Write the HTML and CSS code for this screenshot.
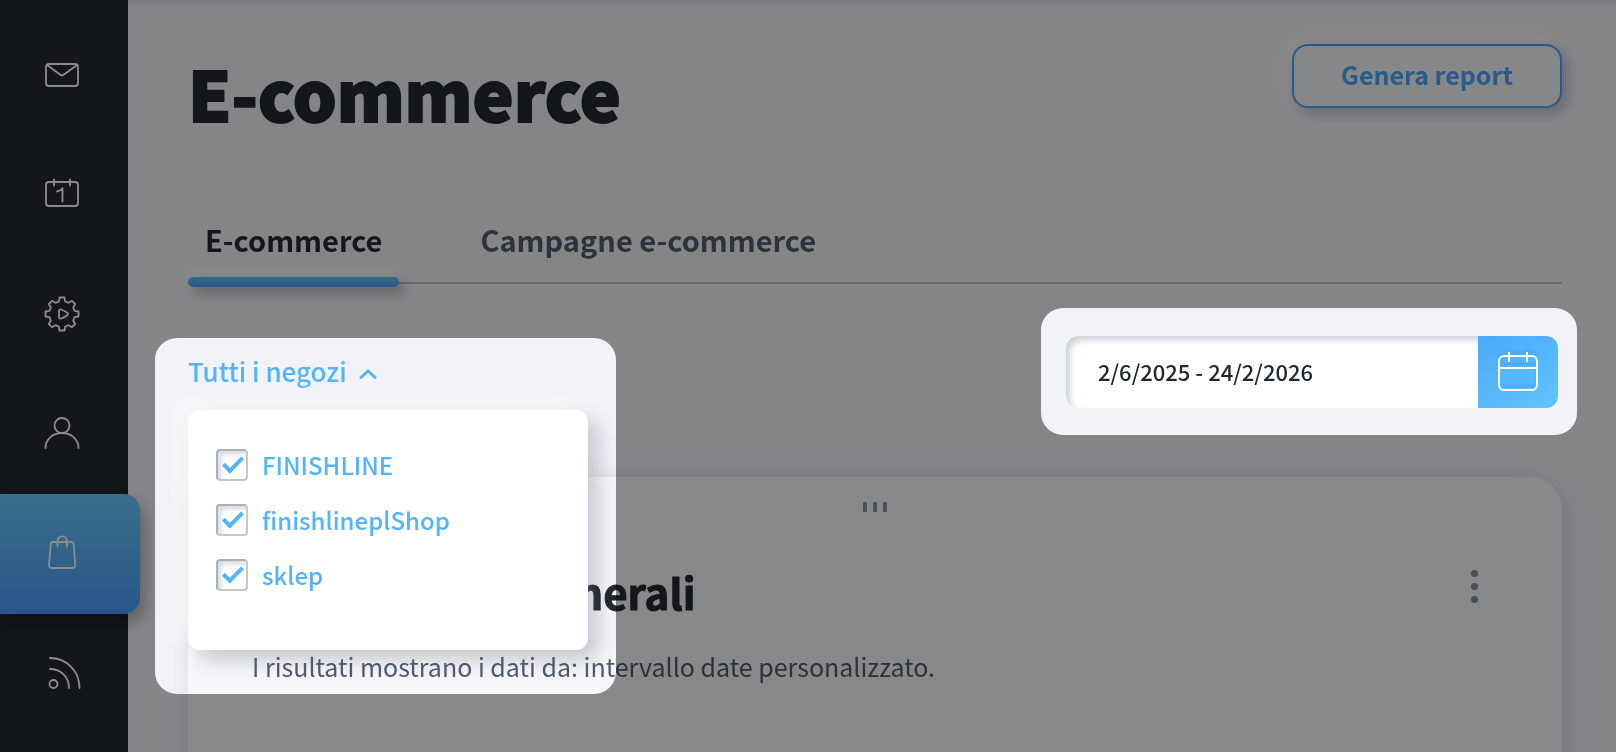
FILE: index.html
```html
<!DOCTYPE html>
<html lang="it">

<head>
    <meta charset="UTF-8">
    <meta name="viewport" content="width=device-width, initial-scale=1.0">
    <title>E-commerce</title>
    <link rel="stylesheet" href="styles.css">
</head>

<body>
    <div class="app">
        <!-- Sidebar -->
        <nav class="sidebar">
            <a href="#" class="sidebar-link" aria-label="Email">
                <svg class="icon" viewBox="0 0 40 40">
                    <rect x="4" y="10" width="32" height="22" rx="3" />
                    <path d="M5 11 L18 20.5 Q20 22 22 20.5 L35 11" />
                </svg>
            </a>
            <a href="#" class="sidebar-link" aria-label="Calendario">
                <svg class="icon" viewBox="0 0 40 40">
                    <rect x="4" y="8" width="32" height="24" rx="3" />
                    <path d="M12 5.500v6M28 5.500v6M15 17.500c2.500-.4 4-1.200 5.500-3.200V27.500" />
                </svg>
            </a>
            <a href="#" class="sidebar-link" aria-label="Automazione">
                <svg class="icon" viewBox="0 0 40 40">
                    <path d="M17.500 3.500h5L23.200 7.500L26.500 8.800L30 6.800L33.200 10L31.200 13.500L32.500 16.800L36.500 17.500V22.500L32.500 23.200L31.200 26.500L33.200 30L30 33.200L26.500 31.200L23.200 32.500L22.500 36.500H17.500L16.800 32.500L13.500 31.200L10 33.200L6.800 30L8.800 26.500L7.500 23.200L3.500 22.500V17.500L7.500 16.800L8.800 13.500L6.800 10L10 6.800L13.500 8.800L16.800 7.500Z" />
                    <path d="M17 17q0-2 2-1.500q4.500 1.500 6.500 3.500q1 1 0 2q-2 2-6.500 3.500q-2 .5-2-1.500Z" />
                </svg>
            </a>
            <a href="#" class="sidebar-link" aria-label="Contatti">
                <svg class="icon" viewBox="0 0 40 40">
                    <circle cx="20" cy="11.500" r="7.500" />
                    <path d="M3.500 34C3.500 25.500 10.500 19 20 19S36.500 25.500 36.500 34" />
                </svg>
            </a>
            <a href="#" class="sidebar-link active" aria-label="E-commerce">
                <svg class="icon" viewBox="0 0 40 40">
                    <path d="M11 8h18.500q2 0 2.200 2l1.500 20.500q.2 3.500-3.200 3.500h-19.800q-3.400 0-3.200-3.500L8.800 10q.2-2 2.200-2Z" />
                    <path d="M15.500 12.500V7a4.700 4.700 0 0 1 9.400 0v5.500" />
                </svg>
            </a>
            <a href="#" class="sidebar-link" aria-label="Feed">
                <svg class="icon" viewBox="0 0 40 40">
                    <circle cx="11.500" cy="30" r="4" />
                    <path d="M8 15C19 15 27 23 27 34M8 4C24.500 4 37.500 17 37.500 34" />
                </svg>
            </a>
        </nav>

        <main class="main">
            <header class="page-header">
                <h1>E-commerce</h1>
                <button type="button" class="report-btn">Genera report</button>
            </header>

            <div class="tabs">
                <a href="#" class="tab active">E-commerce</a>
                <a href="#" class="tab">Campagne e-commerce</a>
            </div>

            <!-- Filters -->
            <div class="filters">
                <div class="shop-filter">
                    <button type="button" class="shop-toggle" aria-expanded="true">
                        Tutti i negozi
                        <svg class="chevron" viewBox="0 0 18 12">
                            <path d="M2 9.500L9 3L16 9.500" />
                        </svg>
                    </button>
                    <div class="shop-menu">
                        <label class="shop-option">
                            <input type="checkbox" checked>
                            <span>FINISHLINE</span>
                        </label>
                        <label class="shop-option">
                            <input type="checkbox" checked>
                            <span>finishlineplShop</span>
                        </label>
                        <label class="shop-option">
                            <input type="checkbox" checked>
                            <span>sklep</span>
                        </label>
                    </div>
                </div>

                <div class="date-picker">
                    <input type="text" class="date-input" value="2/6/2025 - 24/2/2026" aria-label="Intervallo date">
                    <button type="button" class="date-btn" aria-label="Apri calendario">
                        <svg class="date-icon" viewBox="0 0 42 42">
                            <rect x="2" y="5" width="38" height="34" rx="5" />
                            <path d="M2 17h38M12 1v10M30 1v10" />
                        </svg>
                    </button>
                </div>
            </div>

            <!-- Widget -->
            <section class="card">
                <div class="card-grip"><i></i><i></i><i></i></div>
                <div class="card-header">
                    <h2>Informazioni generali</h2>
                    <button type="button" class="card-menu" aria-label="Altre opzioni"><i></i><i></i><i></i></button>
                </div>
                <p class="card-text">I risultati mostrano i dati da: intervallo date personalizzato.</p>
            </section>
        </main>

        <!-- Tour backdrop: white areas stay lit -->
        <div class="tour">
            <div class="tour-spot tour-shops"></div>
            <div class="tour-spot tour-dates"></div>
        </div>
    </div>
</body>

</html>
```

FILE: styles.css
```css
* {
    box-sizing: border-box;
}

body {
    margin: 0;
    background-color: #f2f3f8;
    color: #212830;
    font-family: "Noto Sans CJK SC", "Noto Sans", sans-serif;
}

button,
input {
    font-family: inherit;
    margin: 0;
}

a {
    color: inherit;
    text-decoration: none;
}

.app {
    display: flex;
    position: relative;
    height: 100vh;
    overflow: hidden;
}

/* Sidebar */
.sidebar {
    position: relative;
    z-index: 1;
    flex: 0 0 128px;
    min-width: 0;
    padding-top: 14px;
    background-color: #212830;
}

.sidebar-link {
    display: flex;
    align-items: center;
    width: 140px;
    height: 120px;
    padding-left: 42px;
}

.sidebar-link.active {
    border-radius: 0 16px 16px 0;
    background: linear-gradient(180deg, #66cbfb, #499dfd);
    box-shadow: 4px 8px 16px rgba(0, 0, 0, 0.3);
}

.icon {
    width: 40px;
    height: 40px;
    fill: none;
    stroke: #fff;
    stroke-width: 1.8;
    stroke-linecap: round;
    stroke-linejoin: round;
}

/* Header */
.main {
    flex: 1;
    min-width: 0;
    padding: 44px 54px 0 60px;
    box-shadow: inset 0 12px 12px -12px rgba(0, 0, 0, 0.15);
}

.page-header {
    display: flex;
    align-items: flex-start;
    justify-content: space-between;
    height: 156px;
}

h1 {
    margin: 0;
    font-size: 69px;
    font-weight: 900;
    line-height: 96px;
    -webkit-text-stroke: 2px #212830;
}

.report-btn {
    width: 270px;
    height: 64px;
    padding: 0 0 4px;
    border: 2px solid #4aa3ff;
    border-radius: 16px;
    background-color: #f5f6f8;
    color: #4aa3ff;
    font-size: 25px;
    font-weight: 700;
    box-shadow: 6px 6px 12px rgba(100, 105, 130, 0.35), -6px -6px 12px #fbfaf8;
}

/* Tabs */
.tabs {
    display: flex;
    gap: 64px;
    height: 84px;
    border-bottom: 2px solid #bfbfc0;
    box-shadow: 0 2px 0 #fbfbfb;
}

.tab {
    position: relative;
    padding: 0 17px;
    color: #505c6e;
    font-size: 29px;
    font-weight: 700;
    line-height: 78px;
}

.tab.active {
    color: #212830;
}

.tab.active::after {
    content: '';
    position: absolute;
    bottom: -5px;
    left: 0;
    right: 0;
    height: 10px;
    border-radius: 5px;
    background: linear-gradient(180deg, #63bff0, #499dfd);
    box-shadow: 6px 6px 12px rgba(0, 0, 0, 0.3), 0 -4px 10px #fbfaf8;
}

/* Filters */
.filters {
    display: flex;
    align-items: center;
    justify-content: space-between;
    margin-top: 52px;
    padding-right: 4px;
}

.shop-filter {
    position: relative;
}

.shop-toggle {
    display: flex;
    align-items: center;
    gap: 12px;
    height: 72px;
    padding: 0 0 4px;
    border: none;
    background: none;
    color: #52b4fd;
    font-size: 26px;
    font-weight: 500;
}

.chevron {
    width: 18px;
    height: 12px;
    margin-top: 8px;
    fill: none;
    stroke: #52b4fd;
    stroke-width: 3;
    stroke-linecap: round;
}

.shop-menu {
    position: absolute;
    top: 74px;
    left: 0;
    z-index: 1;
    display: flex;
    flex-direction: column;
    gap: 23px;
    width: 400px;
    height: 240px;
    padding: 39px 28px;
    border-radius: 12px;
    background-color: #fff;
    box-shadow: 10px 10px 20px rgba(60, 60, 80, 0.25), -10px -10px 20px #fafafb;
}

.shop-option {
    display: flex;
    align-items: center;
    gap: 14px;
    height: 32px;
    color: #52b4fd;
    font-size: 24px;
    font-weight: 500;
    cursor: pointer;
}

.shop-option span {
    padding-bottom: 2px;
}

.shop-option input {
    appearance: none;
    width: 32px;
    height: 32px;
    border: 2px solid #c4c8cc;
    border-top-color: #a9b2ba;
    border-left-color: #a9b2ba;
    border-radius: 4px;
    box-shadow: inset 3px 3px 5px #d3dae1;
}

.shop-option input:checked::before {
    content: '';
    display: block;
    box-sizing: border-box;
    width: 20px;
    height: 11px;
    margin: 6px 0 0 5px;
    border: solid #52b4fd;
    border-width: 0 0 4px 4px;
    transform: rotate(-45deg);
}

.date-picker {
    display: flex;
    width: 492px;
    height: 72px;
    border-radius: 12px;
    overflow: hidden;
}

.date-input {
    flex: 1;
    min-width: 0;
    padding: 0 32px 2px;
    border: none;
    border-radius: 12px 0 0 12px;
    background-color: #fff;
    color: #212830;
    font-size: 22px;
    font-weight: 500;
    box-shadow: inset 4px 4px 6px #c9d2da;
}

.date-btn {
    display: flex;
    align-items: center;
    justify-content: center;
    width: 80px;
    padding: 0;
    border: none;
    background: linear-gradient(150deg, #4ba9f9, #61c4fc);
}

.date-icon {
    width: 42px;
    height: 42px;
    fill: none;
    stroke: #fff;
    stroke-width: 2;
    filter: drop-shadow(0 -4px 1px #44a6f6);
}

/* Widget card */
.card {
    height: 400px;
    margin-top: 69px;
    padding: 25px 64px;
    border-radius: 32px;
    background-color: #f5f7fa;
    box-shadow: 8px 8px 20px rgba(100, 105, 125, 0.15), -8px -8px 20px rgba(100, 105, 125, 0.06), inset 3px 3px 4px #faf9f8;
}

.card-grip {
    display: flex;
    justify-content: center;
    gap: 6px;
}

.card-grip i {
    width: 4px;
    height: 10px;
    border-radius: 1px;
    background-color: #7f91a1;
}

.card-header {
    display: flex;
    align-items: center;
    justify-content: space-between;
    margin-top: 50px;
}

h2 {
    margin: 0;
    font-size: 42px;
    font-weight: 700;
    line-height: 60px;
    -webkit-text-stroke: 1px #212830;
}

.card-menu {
    display: flex;
    flex-direction: column;
    align-items: center;
    gap: 6px;
    width: 48px;
    padding: 0 0 12px;
    border: none;
    background: none;
}

.card-menu i {
    width: 7px;
    height: 7px;
    border-radius: 50%;
    background-color: #7f91a1;
}

.card-text {
    margin: 26px 0 0;
    color: #505c6e;
    font-size: 25px;
    line-height: 36px;
}

/* Tour backdrop */
.tour {
    position: absolute;
    inset: 0;
    z-index: 2;
    background-color: #8c8c8c;
    mix-blend-mode: multiply;
    pointer-events: none;
}

.tour-spot {
    position: absolute;
    border-radius: 22px;
    background-color: #fff;
}

.tour-shops {
    top: 338px;
    left: 155px;
    width: 461px;
    height: 356px;
}

.tour-dates {
    top: 308px;
    right: 39px;
    width: 536px;
    height: 127px;
}
```
